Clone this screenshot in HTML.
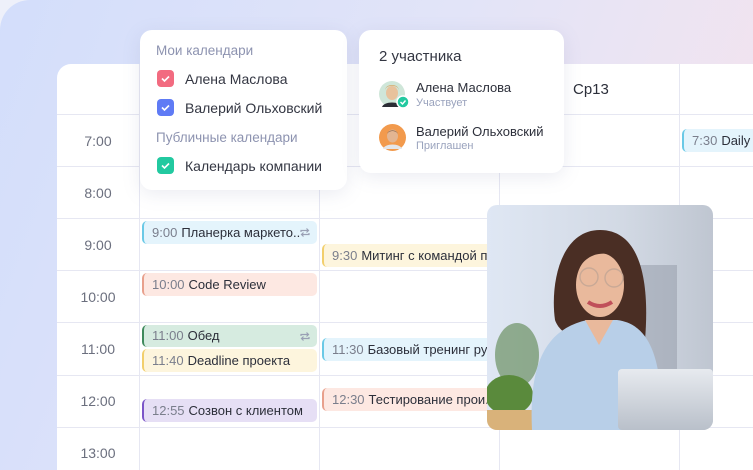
<!DOCTYPE html>
<html><head><meta charset="utf-8"><style>
*{margin:0;padding:0;box-sizing:border-box}
html,body{width:753px;height:470px;overflow:hidden}
body{font-family:"Liberation Sans",sans-serif;background:#eef0fa;position:relative}
.bg{position:absolute;left:0;top:0;width:753px;height:470px;border-radius:30px 0 0 0;background:linear-gradient(110deg,#d3defb 0%,#e2e4f8 50%,#f7e3ec 100%)}
.cal{position:absolute;left:57px;top:64px;width:720px;height:420px;background:#fff;border-radius:14px 0 0 0}
.hl{position:absolute;left:57px;width:700px;height:1px;background:#e6e7f2}
.vl{position:absolute;top:64px;width:1px;height:410px;background:#e6e7f2}
.t{position:absolute;left:57px;width:82px;text-align:center;font-size:14px;color:#6b6f7e}
.ev{position:absolute;height:23px;border-radius:5px;border-left:2px solid;font-size:13px;line-height:23px;padding-left:8px;color:#2c2f3a;white-space:nowrap;overflow:hidden}
.ev span{color:#7a7e8c;margin-right:4px}
.card{position:absolute;background:#fff;border-radius:12px;box-shadow:0 4px 18px rgba(120,130,170,.15)}
.lbl{position:absolute;font-size:13.5px;color:#8d93b0}
.it{position:absolute;font-size:14px;color:#333642}
.cb{position:absolute;width:17px;height:17px;border-radius:4px}
.cb svg{position:absolute;left:3px;top:3px}
.rep{position:absolute;right:6px;top:6px}
</style></head><body>
<div class="bg"></div>
<div class="cal"></div>
<div class="hl" style="top:114px"></div>
<div class="hl" style="top:166px"></div>
<div class="hl" style="top:218px"></div>
<div class="hl" style="top:270px"></div>
<div class="hl" style="top:322px"></div>
<div class="hl" style="top:375px"></div>
<div class="hl" style="top:427px"></div>
<div class="vl" style="left:139px"></div>
<div class="vl" style="left:319px"></div>
<div class="vl" style="left:499px"></div>
<div class="vl" style="left:679px"></div>
<div class="t" style="top:133px">7:00</div>
<div class="t" style="top:185px">8:00</div>
<div class="t" style="top:237px">9:00</div>
<div class="t" style="top:289px">10:00</div>
<div class="t" style="top:341px">11:00</div>
<div class="t" style="top:393px">12:00</div>
<div class="t" style="top:445px">13:00</div>
<div style="position:absolute;left:573px;top:81px;font-size:15px;color:#2c2f3a">Ср13</div>

<div class="ev" style="left:142px;top:221px;width:175px;background:#e4f4fc;border-color:#6ac9e6"><span>9:00</span>Планерка маркето..<svg class="rep" width="12" height="11" viewBox="0 0 12 11"><path d="M2 5V3.5h7M7.5 1.5L9.5 3.5L7.5 5.5M10 6v1.5H3M4.5 9.5L2.5 7.5L4.5 5.5" fill="none" stroke="#9aa0b5" stroke-width="1.2"/></svg></div>
<div class="ev" style="left:142px;top:273px;width:175px;background:#fde8e2;border-color:#e8a08c"><span>10:00</span>Code Review</div>
<div class="ev" style="left:142px;top:325px;width:175px;height:22px;line-height:22px;background:#d6ebe0;border-color:#3f8a5c"><span>11:00</span>Обед<svg class="rep" width="12" height="11" viewBox="0 0 12 11"><path d="M2 5V3.5h7M7.5 1.5L9.5 3.5L7.5 5.5M10 6v1.5H3M4.5 9.5L2.5 7.5L4.5 5.5" fill="none" stroke="#9aa0b5" stroke-width="1.2"/></svg></div>
<div class="ev" style="left:142px;top:349px;width:175px;background:#fdf5dd;border-color:#f2cf6c"><span>11:40</span>Deadline проекта</div>
<div class="ev" style="left:142px;top:399px;width:175px;background:#e6dff5;border-color:#7b55c8"><span>12:55</span>Созвон с клиентом</div>
<div class="ev" style="left:322px;top:244px;width:175px;background:#fdf5dd;border-color:#f2cf6c"><span>9:30</span>Митинг с командой п..</div>
<div class="ev" style="left:322px;top:338px;width:175px;background:#e4f4fc;border-color:#6ac9e6"><span>11:30</span>Базовый тренинг ру..</div>
<div class="ev" style="left:322px;top:388px;width:175px;background:#fde8e2;border-color:#e8a08c"><span>12:30</span>Тестирование прои..</div>
<div class="ev" style="left:682px;top:129px;width:80px;background:#e4f4fc;border-color:#6ac9e6"><span>7:30</span>Daily m</div>

<div class="card" style="left:140px;top:30px;width:207px;height:160px"></div>
<div class="lbl" style="left:156px;top:43px">Мои календари</div>
<div class="cb" style="left:157px;top:70px;background:#f26b80"><svg width="11" height="11"><path d="M2 5.5l2.5 2.5L9 3.5" fill="none" stroke="#fff" stroke-width="1.6"/></svg></div>
<div class="it" style="left:185px;top:71px">Алена Маслова</div>
<div class="cb" style="left:157px;top:99px;background:#5f7bf5"><svg width="11" height="11"><path d="M2 5.5l2.5 2.5L9 3.5" fill="none" stroke="#fff" stroke-width="1.6"/></svg></div>
<div class="it" style="left:185px;top:100px">Валерий Ольховский</div>
<div class="lbl" style="left:156px;top:130px">Публичные календари</div>
<div class="cb" style="left:157px;top:157px;background:#22c9a0"><svg width="11" height="11"><path d="M2 5.5l2.5 2.5L9 3.5" fill="none" stroke="#fff" stroke-width="1.6"/></svg></div>
<div class="it" style="left:185px;top:158px">Календарь компании</div>

<div class="card" style="left:359px;top:30px;width:205px;height:143px"></div>
<div style="position:absolute;left:379px;top:48px;font-size:15px;color:#333642">2 участника</div>
<svg style="position:absolute;left:379px;top:81px" width="32" height="30"><circle cx="13" cy="13" r="13" fill="#cfe6d9"/><ellipse cx="13" cy="12" rx="6" ry="7" fill="#e8c29c"/><path d="M6 10c0-7 14-7 14 0c0-4-3-6-7-6s-7 2-7 6z" fill="#d9aa6a"/><path d="M3 26c2-6 18-6 20 0z" fill="#2b2d35"/><circle cx="24" cy="21" r="6" fill="#22c9a0" stroke="#fff" stroke-width="1.5"/><path d="M21.5 21l2 2l3-3.5" fill="none" stroke="#fff" stroke-width="1.4"/></svg>
<div style="position:absolute;left:416px;top:80px;font-size:13px;color:#2c2f3a">Алена Маслова</div>
<div style="position:absolute;left:416px;top:97px;font-size:11px;color:#9aa3bd">Участвует</div>
<svg style="position:absolute;left:379px;top:124px" width="27" height="27"><circle cx="13.5" cy="13.5" r="13.5" fill="#f29a4d"/><ellipse cx="13.5" cy="12" rx="5.5" ry="6.5" fill="#e3b592"/><path d="M8 11c0-6 11-6 11 0c0-2-2-4-5.5-4S8 9 8 11z" fill="#6b4a34"/><path d="M4 25c2-6 17-6 19 0z" fill="#e4e6ea"/></svg>
<div style="position:absolute;left:416px;top:124px;font-size:13px;color:#2c2f3a">Валерий Ольховский</div>
<div style="position:absolute;left:416px;top:140px;font-size:11px;color:#9aa3bd">Приглашен</div>

<svg style="position:absolute;left:487px;top:205px;border-radius:10px" width="226" height="225" viewBox="0 0 226 225">
<defs><linearGradient id="b" x1="0" x2="1"><stop offset="0" stop-color="#dfe7f4"/><stop offset=".6" stop-color="#d2d9e4"/><stop offset="1" stop-color="#bfc6d1"/></linearGradient>
<linearGradient id="l" x1="0" y1="0" x2="0" y2="1"><stop offset="0" stop-color="#e7eaef"/><stop offset="1" stop-color="#b9c0ca"/></linearGradient></defs>
<rect width="226" height="225" fill="url(#b)"/>
<rect x="150" y="60" width="40" height="110" fill="#8c939f" opacity=".45"/>
<ellipse cx="30" cy="150" rx="22" ry="32" fill="#4c7a3d" opacity=".55"/>
<ellipse cx="22" cy="190" rx="24" ry="20" fill="#5a8a3c"/>
<rect x="0" y="205" width="45" height="20" fill="#d9b27a"/>
<path d="M68 115c-5-35 5-90 45-90s50 50 45 110c-10 10-80 10-90-20z" fill="#4a2e24"/>
<ellipse cx="113" cy="80" rx="24" ry="32" fill="#e9b99c"/>
<path d="M90 70c5-25 40-30 50-5c-5-15-15-22-25-22s-22 8-25 27z" fill="#4a2e24"/>
<path d="M101 97q12 8 24 0" stroke="#c0505a" stroke-width="4" fill="none"/>
<circle cx="102" cy="72" r="9" fill="none" stroke="#c9a996" stroke-width="1.4"/><circle cx="127" cy="73" r="9" fill="none" stroke="#c9a996" stroke-width="1.4"/>
<path d="M45 225c-3-60 10-100 55-110h30c40 5 45 55 45 110z" fill="#b8cfe8"/>
<path d="M98 115l14 25l14-25" fill="#e9b99c"/>
<rect x="131" y="164" width="95" height="61" rx="4" fill="url(#l)"/>
</svg>
</body></html>
